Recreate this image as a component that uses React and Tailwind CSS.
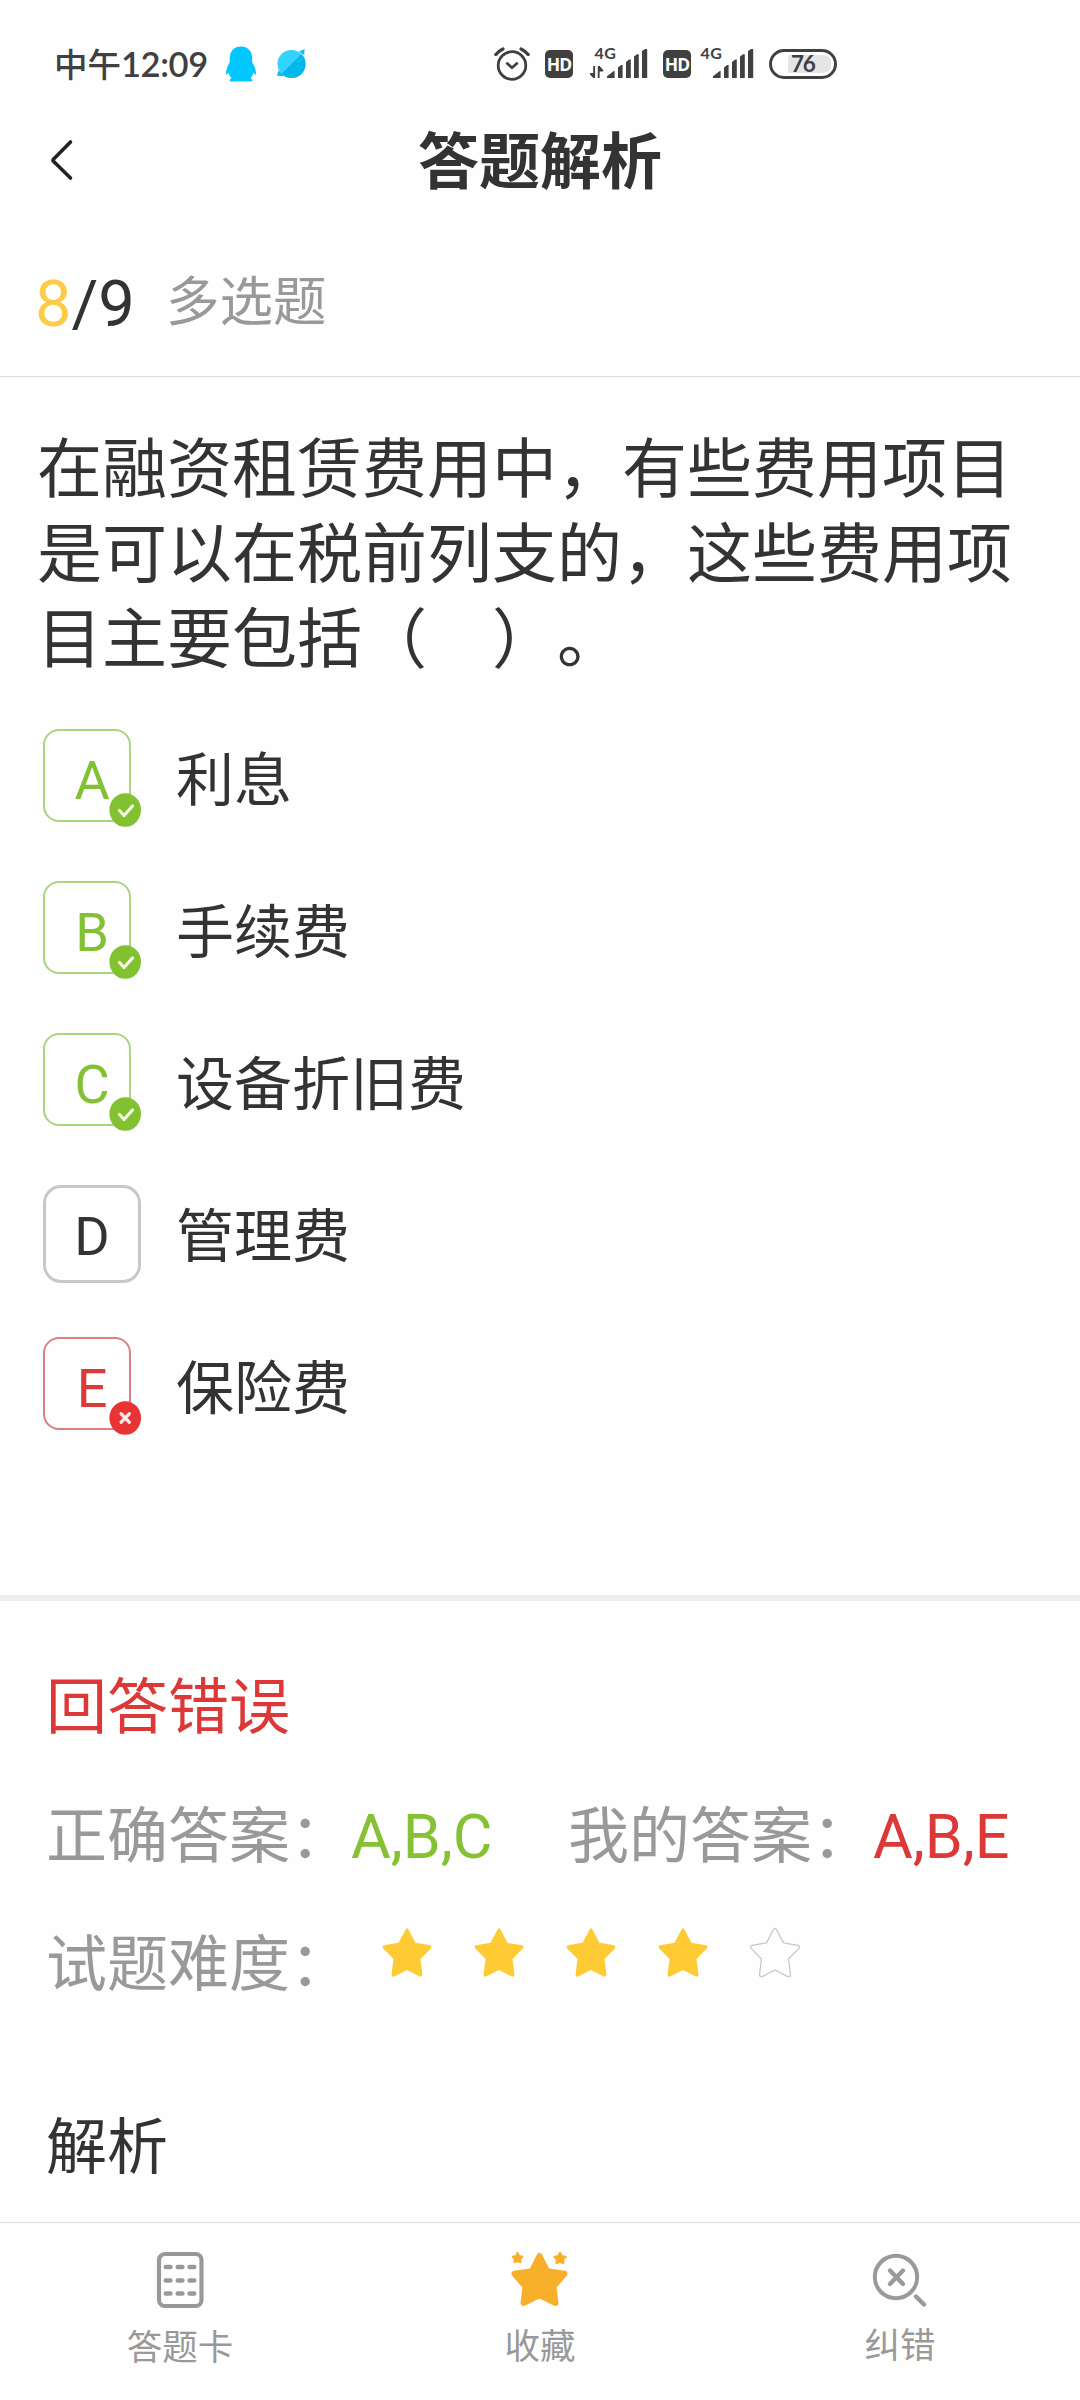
const FONT = "font-['Roboto','Noto_Sans_CJK_SC',sans-serif]";

function AlarmIcon() {
  return (
    <svg className="block h-[36px] w-[36px]" viewBox="494 46 36 36" fill="none" stroke="#404040" strokeLinecap="round" strokeLinejoin="round">
      <circle cx="512" cy="65.5" r="13.8" strokeWidth="2.8" />
      <path d="M507.3 63.5l4.7 4.3 4.8-4.3" strokeWidth="2.8" />
      <path d="M495.9 54.5q3-3.6 7-5.6M528.1 54.5q-3-3.6-7-5.6" strokeWidth="3.4" />
    </svg>
  );
}

function HdBadge() {
  return (
    <div className="flex h-[28px] w-[28px] items-center justify-center rounded-[5px] bg-[#404040] pt-px font-['Open_Sans',sans-serif] text-[17.5px] leading-none font-bold tracking-[-1px] text-white">
      HD
    </div>
  );
}

function Signal({ arrows }) {
  return (
    <svg className="block h-[40px] w-[58px]" viewBox="590 39 58 40" fill="#404040">
      <text x="594.4" y="59" fontFamily="Lato, sans-serif" fontWeight="700" fontSize="16" textLength="21.5">4G</text>
      {arrows && <path d="M593.2 66h1.9v12h-1.9l-3.2-3.6v-1.4h3.2zM597.8 66h1.8l3.6 4v1.4h-3.6v6.6h-1.8z" />}
      <path d="M607 78v-1.8l6.8-5.2h.8v7zM618 78v-10.5l3.2-2.4h1.4V78zM626 78V62l3.2-2.4h1.6V78zM634 78V56.5l3-2.2h1.8V78zM642 78V51l3.2-2h1.4q.6 0 .6.8V78z" />
    </svg>
  );
}

function StatusBar() {
  return (
    <div className="flex h-[128px] items-start pt-[46px] text-[#404040]">
      <div className="ml-[54px] h-[36px] w-[156px] font-['Lato','Noto_Sans_CJK_SC',sans-serif] leading-[36px] font-medium whitespace-nowrap">
        <span className="text-[33.5px]">中午</span>
        <span className="text-[34.5px] font-semibold tracking-[-0.4px]">12:09</span>
      </div>
      <svg className="ml-[15px] h-[36px] w-[32px]" viewBox="225 46 32 36" fill="#00c8ff">
        <path d="M241 46.4c7 0 11.2 4.8 11.2 11.6v4.2c2.2 3.6 3.7 7.4 3.8 11.2.1 1.6-.8 1.7-2.6-.8-.5 2.2-1.4 4-2.8 5.6 1.4.7 2.2 1.5 1.7 3-4 .5-7.6.2-11.3.2s-7.5.3-11.3-.2c-.5-1.5.3-2.3 1.7-3-1.4-1.6-2.3-3.4-2.8-5.6-1.8 2.5-2.7 2.4-2.6.8.1-3.8 1.6-7.6 3.8-11.2V58c0-6.8 4.2-11.6 11.2-11.6z" />
      </svg>
      <svg className="mt-[3px] ml-[19px] h-[31px] w-[31px]" viewBox="275.5 49.5 31 31">
        <circle cx="291" cy="64.5" r="14" fill="#33d2ff" />
        <path d="M300.9 54.6a14 14 0 0 1-19.8 19.8z" fill="#00b8ec" />
        <path d="M298.5 52l5.6-2.4-.4 6.2zM283.500 76.800l-7-.6 1.600-5.400z" fill="#12bcec" />
      </svg>
      <div className="ml-[187px] flex items-start">
        <AlarmIcon />
        <div className="mt-[4px] ml-[15px]"><HdBadge /></div>
        <div className="-mt-[7px] ml-[17px]"><Signal arrows /></div>
        <div className="mt-[4px] ml-[15px]"><HdBadge /></div>
        <div className="-mt-[7px] ml-[5px]"><Signal /></div>
        <div className="mt-[3px] ml-[15px] flex h-[30px] w-[68px] items-center rounded-full border-[3px] border-[#404040] pl-[16px]">
          <div className="flex h-[18px] w-[43px] items-center rounded-l-[2px] rounded-r-[8px] bg-[#e5e5e5] pl-[3px] font-['Lato',sans-serif] text-[22.5px] leading-none font-bold tracking-[-1.4px]">
            76
          </div>
        </div>
      </div>
    </div>
  );
}

function CheckMark() {
  return (
    <>
      <ellipse cx="82.2" cy="81" rx="15.8" ry="16.8" fill="#82c12f" />
      <path d="M76.5 81.5l4.5 5 8.6-9.600" fill="none" stroke="#f4fbe8" strokeWidth="3.1" strokeLinecap="round" strokeLinejoin="round" />
    </>
  );
}

function CrossMark() {
  return (
    <>
      <ellipse cx="82.2" cy="81" rx="15.8" ry="16.8" fill="#e83434" />
      <path d="M78.2 76.8l8 8.4M86.2 76.8l-8 8.4" stroke="#fdeaea" strokeWidth="3.4" strokeLinecap="round" />
    </>
  );
}

function OptionBox({ letter, state }) {
  if (state === "plain") {
    return (
      <div className="flex h-[98px] w-[98px] items-center justify-center rounded-[18px] border-[3px] border-[#c8c8c8] pt-[5px] text-[54px] leading-none text-[#333]">
        {letter}
      </div>
    );
  }
  const right = state === "right";
  return (
    <div className={`relative flex h-[98px] w-[98px] items-center justify-center pt-[5px] text-[54px] leading-none ${right ? "text-[#82c034]" : "text-[#dc3a3a]"}`}>
      <svg className="absolute inset-0" width="98" height="98" viewBox="0 0 98 98">
        <rect x="1" y="1" width="86" height="91" rx="15" fill="none" stroke={right ? "#a9d480" : "#dd8080"} strokeWidth="2" />
        {right ? <CheckMark /> : <CrossMark />}
      </svg>
      <span>{letter}</span>
    </div>
  );
}

const OPTIONS = [
  { letter: "A", text: "利息", state: "right" },
  { letter: "B", text: "手续费", state: "right" },
  { letter: "C", text: "设备折旧费", state: "right" },
  { letter: "D", text: "管理费", state: "plain" },
  { letter: "E", text: "保险费", state: "wrong" },
];

const STAR =
  "M24.2 1.3Q25.5-.6 26.8 1.3L34 14.8L48.5 17.3Q50.8 18.4 49.3 20.4L39 31L41 46.5Q40.8 49.2 38.3 48.6L25.5 42L12.7 48.6Q10.2 49.2 10 46.5L12 31L1.7 20.4Q.2 18.4 2.5 17.3L17 14.8Z";

function Star({ filled }) {
  return (
    <svg className="h-[51px] w-[52px]" viewBox="-.5 -1 52 51">
      <path d={STAR} fill={filled ? "#ffcb35" : "none"} stroke={filled ? "none" : "#c8c8c8"} strokeWidth="1.3" />
    </svg>
  );
}

function CardIcon() {
  return (
    <svg className="block h-[58px] w-[58px]" viewBox="0 0 58 58" fill="none" stroke="#999">
      <rect x="8" y="4" width="42.5" height="52" rx="6" strokeWidth="4.2" />
      <path d="M14.8 17h4.6M26.8 17h4.6M38.6 17h4.6M14.8 30.5h4.6M26.8 30.5h4.6M38.6 30.5h4.6M14.8 43.5h4.6M26.8 43.5h4.6M38.6 43.5h4.6" strokeWidth="4.6" strokeLinecap="round" />
    </svg>
  );
}

function FavoriteIcon() {
  return (
    <svg className="block h-[58px] w-[58px]" viewBox="0 0 58 58" fill="#f8b02c" stroke="#f8b02c" strokeLinejoin="round">
      <path d="M28.5 6L36 21.2L53.5 23.8L42.5 36.5L44.5 53L28.5 45L12.5 53L14.5 36.5L3.5 23.8L21 21.2Z" strokeWidth="6" />
      <path d="M6.5 2.5L8.2 5.9L11.5 6.6L9.3 9.4L9.6 12.5L6.5 11.2L3.4 12.5L3.7 9.4L1.5 6.6L4.8 5.9Z" strokeWidth="1.6" />
      <path d="M49 2.5L51 5.9L55 6.8L52.3 9.8L52.7 13.5L49 12.1L45.3 13.5L45.7 9.8L43 6.8L47 5.9Z" strokeWidth="1.6" />
    </svg>
  );
}

function ReportIcon() {
  return (
    <svg className="block h-[58px] w-[58px]" viewBox="0 0 58 58" fill="none" stroke="#999" strokeLinecap="round">
      <circle cx="25" cy="27" r="21.2" strokeWidth="4" />
      <path d="M19 20.5l13 13.5M32 20.5l-13 13.5" strokeWidth="4.4" />
      <path d="M45 46.5l8 8" strokeWidth="4.4" />
    </svg>
  );
}

function Tab({ icon, label, gap }) {
  return (
    <div className="flex flex-1 flex-col items-center pt-[27px] text-[#999]">
      {icon}
      <span className={`text-[35.5px] leading-[52px] ${gap}`}>{label}</span>
    </div>
  );
}

export default function App() {
  return (
    <div className={`flex h-[2400px] w-[1080px] flex-col overflow-hidden bg-[#fefefe] text-[#333] ${FONT}`} lang="zh-CN">
      <StatusBar />
      <header className="flex h-[64px] items-center justify-between px-[50px]">
        <svg className="h-[42px] w-[24px]" viewBox="0 0 24 42" fill="none" stroke="#222" strokeWidth="3.6" strokeLinecap="round" strokeLinejoin="round">
          <path d="M20.5 3L3.2 20.5Q2.6 21.3 3.2 22L20.5 39" />
        </svg>
        <h1 className="pt-[5px] text-[61px] leading-[64px] font-bold">答题解析</h1>
        <span className="w-[24px]" />
      </header>

      <section className="flex h-[185px] items-start border-b border-[#ddd] pl-[35px]">
        <span className="pt-[66px] text-[65px] leading-[92px]">
          <span className="text-[#fbcc45]">8</span>/9
        </span>
        <span className="ml-[31px] pt-[65px] text-[53.5px] leading-[92px] text-[#999]">多选题</span>
      </section>

      <section className="h-[1218px] pt-[51px]">
        <p className="ml-[37px] w-[980px] text-[65px] leading-[85px] [text-spacing-trim:space-all]">
          在融资租赁费用中，有些费用项目是可以在税前列支的，这些费用项目主要包括（　）。
        </p>
        <ul className="mt-[46px] flex flex-col gap-[54px] pl-[43px]">
          {OPTIONS.map((o) => (
            <li key={o.letter} className="flex h-[98px] items-center">
              <OptionBox letter={o.letter} state={o.state} />
              <span className="ml-[35px] pt-[5px] text-[58px] leading-[98px]">{o.text}</span>
            </li>
          ))}
        </ul>
      </section>

      <section className="h-[627px] border-t-[6px] border-[#eee] pt-[67px] pl-[46px] text-[61px] leading-[80px] [text-spacing-trim:space-all]">
        <div className="text-[#dc3838]">回答错误</div>
        <div className="mt-[49px] flex text-[#999]">
          <div className="w-[522px]">
            正确答案：<span className="text-[#85c035]">A,B,C</span>
          </div>
          <div>
            我的答案：<span className="text-[#dc3838]">A,B,E</span>
          </div>
        </div>
        <div className="mt-[48px] flex text-[#999]">
          <span>试题难度：</span>
          <div className="mt-[2px] ml-[30px] flex gap-[40px]">
            {[1, 2, 3, 4, 5].map((n) => (
              <Star key={n} filled={n < 5} />
            ))}
          </div>
        </div>
        <h2 className="mt-[103px]">解析</h2>
      </section>

      <nav className="flex h-[178px] border-t border-[#ddd]">
        <Tab icon={<CardIcon />} label="答题卡" gap="mt-[14px]" />
        <Tab icon={<FavoriteIcon />} label="收藏" gap="mt-[13px]" />
        <Tab icon={<ReportIcon />} label="纠错" gap="mt-[12px]" />
      </nav>
    </div>
  );
}
